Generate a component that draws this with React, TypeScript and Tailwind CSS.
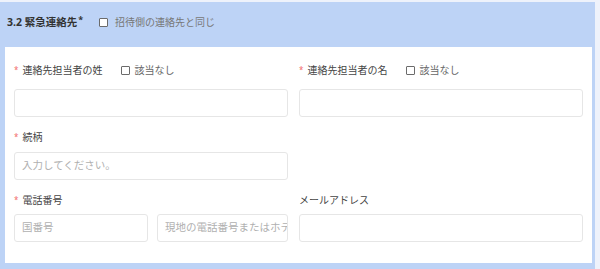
import React from "react";

const font = { fontFamily: '"Noto Sans", "Noto Sans CJK JP", sans-serif' };

function Box() {
  return <span className="inline-block w-[9px] h-[9px] border border-[#6b6b6b] rounded-[1px] bg-white shrink-0" />;
}

function Label({ text, req, check }: { text: string; req?: boolean; check?: boolean }) {
  return (
    <div className="flex items-center h-[18px] text-[10px] text-[#444]">
      {req && <span className="text-[#f26b6b] text-[8px] leading-none self-start mt-[5px] mr-[4px]">*</span>}
      <span>{text}</span>
      {check && (
        <span className="flex items-center ml-[19px] text-[#666]">
          <Box />
          <span className="ml-[4px]">該当なし</span>
        </span>
      )}
    </div>
  );
}

function Input({ ph, className = "" }: { ph?: string; className?: string }) {
  return (
    <div className={"h-[28px] border border-[#e6e6e6] rounded-[3px] bg-white flex items-center pl-[7px] overflow-hidden whitespace-nowrap text-[10.5px] text-[#b0b0b0] " + className}>
      {ph}
    </div>
  );
}

export default function App() {
  return (
    <div className="w-[600px] h-[269px] bg-[#eef2fb] pt-[2px]" style={font}>
      <div className="w-[595px] h-[267px] bg-[#bdd3f6]">
        <div className="h-[45px] flex items-center pl-[7px] pb-[4px]">
          <span className="text-[10.5px] font-bold text-[#333]">3.2 緊急連絡先</span>
          <span className="text-[9px] font-bold text-[#333] self-start mt-[11px] ml-[1px]">*</span>
          <span className="flex items-center ml-[16px] text-[10px] text-[#777]">
            <Box />
            <span className="ml-[7px]">招待側の連絡先と同じ</span>
          </span>
        </div>
        <div className="ml-[5px] w-[587px] h-[216px] bg-white px-[9px] pt-[14px]">
          <div className="grid grid-cols-[274px_284px] gap-x-[11px]">
            <div>
              <Label text="連絡先担当者の姓" req check />
              <Input className="mt-[10px]" />
            </div>
            <div>
              <Label text="連絡先担当者の名" req check />
              <Input className="mt-[10px]" />
            </div>
          </div>
          <div className="grid grid-cols-[274px_284px] gap-x-[11px] mt-[11px]">
            <div>
              <Label text="続柄" req />
              <Input className="mt-[6px]" ph="入力してください。" />
            </div>
            <div />
          </div>
          <div className="grid grid-cols-[274px_284px] gap-x-[11px] mt-[11px]">
            <div>
              <Label text="電話番号" req />
              <div className="flex gap-[9px] mt-[5px]">
                <Input className="w-[134px] shrink-0" ph="国番号" />
                <Input className="flex-1 min-w-0" ph="現地の電話番号またはホテルの電話番号" />
              </div>
            </div>
            <div>
              <Label text="メールアドレス" />
              <Input className="mt-[5px]" />
            </div>
          </div>
        </div>
      </div>
    </div>
  );
}
